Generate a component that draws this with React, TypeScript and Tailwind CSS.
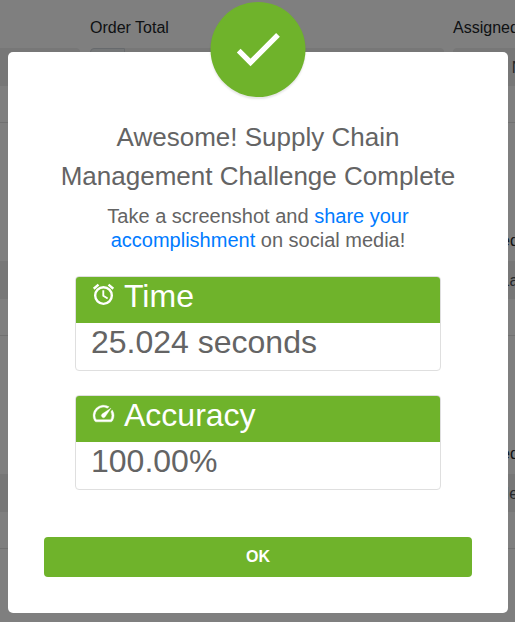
import React from "react";

const rows = [
  { id: "order-1", agent: "Nancy" },
  { id: "order-2", agent: "Laura Hill" },
  { id: "order-3", agent: "Henry Lee" },
];

function AlarmIcon() {
  return (
    <svg viewBox="0 0 24 24" className="size-[25px]" fill="none" stroke="currentColor" strokeWidth="2.3" aria-hidden="true">
      <circle cx="12" cy="13" r="8" />
      <path d="M2.6 6.5 L7.2 2.6 M21.4 6.5 L16.8 2.6" />
      <path d="M11.8 8 V13.2 L16 15.8" strokeWidth="1.8" />
    </svg>
  );
}

function GaugeIcon() {
  return (
    <svg viewBox="0 0 24 24" className="size-[25px]" fill="currentColor" stroke="currentColor" strokeWidth="0.4" aria-hidden="true">
      <path d="M20.38 8.57l-1.23 1.85a8 8 0 0 1-.22 7.58H5.07A8 8 0 0 1 15.58 6.85l1.85-1.23A10 10 0 0 0 3.35 19a2 2 0 0 0 1.72 1h13.85a2 2 0 0 0 1.74-1 10 10 0 0 0-.27-10.44z" />
      <path d="M10.59 15.41a2 2 0 0 0 2.83 0l5.66-8.49-8.49 5.66a2 2 0 0 0 0 2.83z" />
    </svg>
  );
}

function OrderRow({ id, agent }: { id: string; agent: string }) {
  return (
    <div className="h-[213px] shrink-0 pt-[16px]">
      <div className="flex h-[24px] items-center text-base text-[#212529]">
        <span className="w-[90px] shrink-0" />
        <label htmlFor={`${id}-total`} className="w-[363px] shrink-0">
          Order Total
        </label>
        <label htmlFor={`${id}-agent`} className="shrink-0 whitespace-nowrap">
          Assigned Agent
        </label>
      </div>
      <div className="mt-[8px] flex h-[38px] text-base text-[#495057]">
        <div className="mr-[10px] w-[80px] shrink-0 rounded-r bg-[#eeeeee]" />
        <div className="w-[35px] shrink-0 rounded-l border border-[#ced4da] bg-[#e9ecef]" />
        <input id={`${id}-total`} readOnly className="mr-[9px] w-[319px] shrink-0 rounded-r bg-[#eeeeee]" />
        <input
          id={`${id}-agent`}
          readOnly
          value={agent}
          className="w-[163px] shrink-0 rounded bg-[#eeeeee] pt-[2px] text-center"
        />
      </div>
      <div className="mt-[36px] border-t border-[#e2e2e2]" />
    </div>
  );
}

function ResultCard({ icon, title, value }: { icon: React.ReactNode; title: string; value: string }) {
  return (
    <section className="overflow-hidden rounded border border-[#dfdfdf] bg-white text-[32px] leading-[38px] text-[#646464]">
      <h3 className="flex h-[46px] items-start gap-[8px] bg-[#6fb32b] px-[15px] text-white">
        <span className="pt-[5px]">{icon}</span>
        {title}
      </h3>
      <p className="h-[47px] px-[15px]">{value}</p>
    </section>
  );
}

export default function App() {
  return (
    <div className="relative h-screen overflow-hidden bg-white font-['Liberation_Sans',Arial,sans-serif]">
      <div className="flex h-full flex-col overflow-hidden" inert>
        {rows.map((row) => (
          <OrderRow key={row.id} id={row.id} agent={row.agent} />
        ))}
      </div>
      <div className="absolute inset-0 bg-black/50 pt-[52px] pr-[7px] pl-[8px]">
        <div
          role="dialog"
          aria-modal="true"
          aria-labelledby="result-title"
          className="relative mx-auto max-w-[500px] rounded-[5px] bg-white px-[36px] pt-[66px] pb-[36px] text-center text-[#646464]"
        >
          <div className="absolute -top-[50px] left-1/2 size-[95px] -translate-x-1/2 rounded-full bg-[#6fb32b] text-white shadow-[0_2px_2px_rgba(0,0,0,0.1)]">
            <svg viewBox="0 0 95 95" className="size-full" fill="none" stroke="currentColor" strokeWidth="5.3" aria-hidden="true">
              <path d="M28.2 48.7 L40 60.4 L67.5 32.9" />
            </svg>
          </div>
          <h2 id="result-title" className="text-[26px] leading-[39px]">
            Awesome! Supply Chain Management Challenge Complete
          </h2>
          <p className="mx-auto mt-[8px] max-w-[366px] text-[20px] leading-[24px]">
            Take a screenshot and{" "}
            <a href="#share" className="text-[#007bff]">
              share your accomplishment
            </a>{" "}
            on social media!
          </p>
          <div className="mt-[24px] flex flex-col gap-[24px] px-[31px] text-left">
            <ResultCard icon={<AlarmIcon />} title="Time" value="25.024 seconds" />
            <ResultCard icon={<GaugeIcon />} title="Accuracy" value="100.00%" />
          </div>
          <button
            type="button"
            className="mt-[47px] h-[40px] w-full rounded bg-[#6fb32b] pb-px text-base font-bold text-white"
          >
            OK
          </button>
        </div>
      </div>
    </div>
  );
}
